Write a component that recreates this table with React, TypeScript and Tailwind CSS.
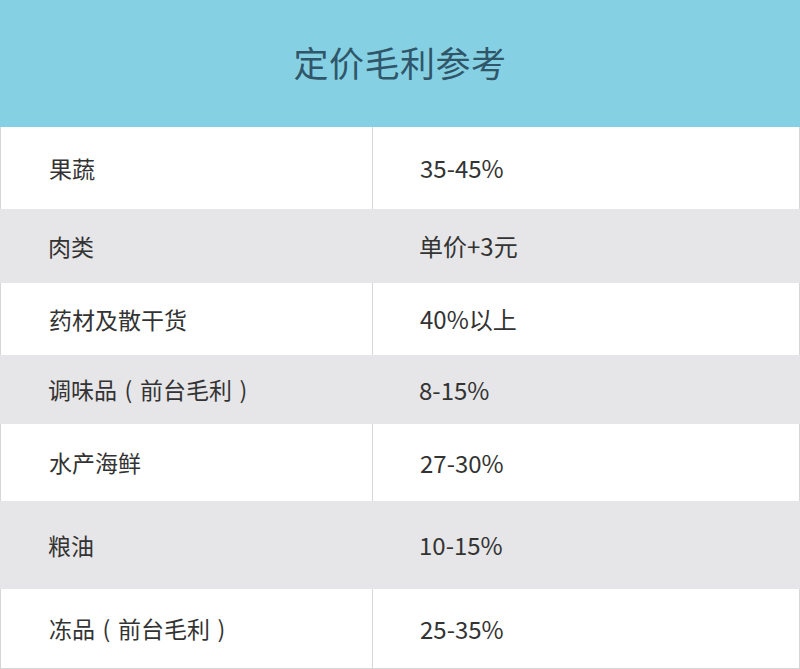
const rows = [
  { name: "果蔬", value: "35-45%", h: "h-[82px]" },
  { name: "肉类", value: "单价+3元", h: "h-[74px]" },
  { name: "药材及散干货", value: "40%以上", h: "h-[72px]" },
  { name: "调味品|前台毛利", value: "8-15%", h: "h-[69px]" },
  { name: "水产海鲜", value: "27-30%", h: "h-[77px]" },
  { name: "粮油", value: "10-15%", h: "h-[88px]" },
  { name: "冻品|前台毛利", value: "25-35%", h: "h-[79px]" },
];

function Name({ text }: { text: string }) {
  const [main, note] = text.split("|");
  if (!note) return <>{main}</>;
  return (
    <>
      {main}
      <span className="inline-block w-[23px] text-center">(</span>
      {note}
      <span className="inline-block w-[23px] text-center">)</span>
    </>
  );
}

export default function App() {
  return (
    <div className="w-[800px] h-[669px] bg-white font-['Noto_Sans_CJK_SC',sans-serif] text-[#333333]">
      <div className="flex h-[127px] items-center justify-center bg-[#86d0e3]">
        <h1 className="pb-1 text-[35px] leading-none tracking-[0.5px] text-[#30566a]">定价毛利参考</h1>
      </div>
      {rows.map((row, i) => {
        const shaded = i % 2 === 1;
        return (
          <div
            key={row.name}
            className={
              shaded
                ? `grid grid-cols-[372px_1fr] bg-[#e6e5e7] ${row.h}`
                : `grid grid-cols-[372px_1fr] border-x border-[#d6d6d6] bg-white ${row.h}`
            }
          >
            <div
              className={
                shaded
                  ? "flex items-center pl-[48px] text-[23px]"
                  : "flex items-center border-r border-[#d6d6d6] pl-[48px] text-[23px]"
              }
            >
              <Name text={row.name} />
            </div>
            <div className="flex items-center pl-[47px] text-[24px]">{row.value}</div>
          </div>
        );
      })}
      <div className="h-px bg-[#d6d6d6]" />
    </div>
  );
}
